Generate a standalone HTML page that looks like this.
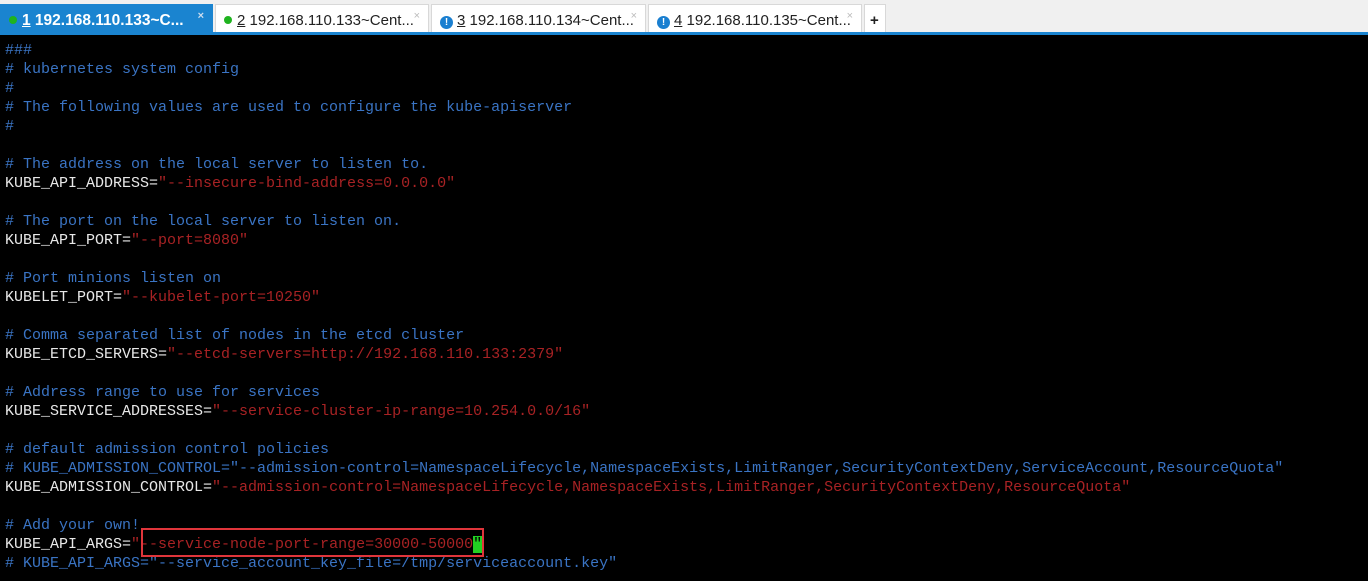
<!DOCTYPE html>
<html><head><meta charset="utf-8"><style>
*{margin:0;padding:0;box-sizing:border-box}
body{width:1368px;height:581px;background:#000;overflow:hidden;font-family:"Liberation Sans",sans-serif}
.bar{position:absolute;left:0;top:0;width:1368px;height:35px;background:#f0f0f0;border-bottom:3px solid #1a84d0}
.tab{position:absolute;top:4px;height:28px;background:#fff;border:1px solid #d8d8d8;border-bottom:none;font-size:15px;color:#222;padding:7px 0 0 8px;white-space:nowrap}
.tab.a{top:4px;background:#1a84d0;color:#fff;font-weight:bold;border-color:#1a84d0;font-size:15.5px}
.dot{display:inline-block;width:8px;height:8px;border-radius:50%;background:#1fb31f;margin-right:5px;vertical-align:1px}
.ex{display:inline-block;width:13px;height:13px;border-radius:50%;background:#1a7fd0;color:#fff;font-size:10px;font-weight:bold;text-align:center;line-height:13px;margin-right:4px;vertical-align:0px}
.x{position:absolute;right:8px;top:5px;font-size:11px;color:#bbb}
.a .x{color:#cde}
u{text-decoration:underline}
pre{position:absolute;left:5px;top:41px;font-family:"Liberation Mono",monospace;font-size:15px;line-height:19px;color:#e8e8e8}
.c{color:#3a74c4}.s{color:#a82224}
.box{position:absolute;left:141px;top:528px;width:343px;height:29px;border:2px solid #e0353b}
.cur{background:#22d022;color:#000}
</style></head><body>
<div class="bar">
<div class="tab a" style="left:0;width:213px"><span class="dot"></span><u>1</u> 192.168.110.133~C...<span class="x">×</span></div>
<div class="tab" style="left:215px;width:214px"><span class="dot"></span><u>2</u> 192.168.110.133~Cent...<span class="x">×</span></div>
<div class="tab" style="left:431px;width:215px"><span class="ex">!</span><u>3</u> 192.168.110.134~Cent...<span class="x">×</span></div>
<div class="tab" style="left:648px;width:214px"><span class="ex">!</span><u>4</u> 192.168.110.135~Cent...<span class="x">×</span></div>
<div class="tab" style="left:864px;width:22px;padding-left:5px;font-weight:bold">+</div>
</div>
<pre><span class="c">###
# kubernetes system config
#
# The following values are used to configure the kube-apiserver
#</span>

<span class="c"># The address on the local server to listen to.</span>
KUBE_API_ADDRESS=<span class="s">"--insecure-bind-address=0.0.0.0"</span>

<span class="c"># The port on the local server to listen on.</span>
KUBE_API_PORT=<span class="s">"--port=8080"</span>

<span class="c"># Port minions listen on</span>
KUBELET_PORT=<span class="s">"--kubelet-port=10250"</span>

<span class="c"># Comma separated list of nodes in the etcd cluster</span>
KUBE_ETCD_SERVERS=<span class="s">"--etcd-servers=http://192.168.110.133:2379"</span>

<span class="c"># Address range to use for services</span>
KUBE_SERVICE_ADDRESSES=<span class="s">"--service-cluster-ip-range=10.254.0.0/16"</span>

<span class="c"># default admission control policies
# KUBE_ADMISSION_CONTROL="--admission-control=NamespaceLifecycle,NamespaceExists,LimitRanger,SecurityContextDeny,ServiceAccount,ResourceQuota"</span>
KUBE_ADMISSION_CONTROL=<span class="s">"--admission-control=NamespaceLifecycle,NamespaceExists,LimitRanger,SecurityContextDeny,ResourceQuota"</span>

<span class="c"># Add your own!</span>
KUBE_API_ARGS=<span class="s">"--service-node-port-range=30000-50000</span><span class="cur">"</span>
<span class="c"># KUBE_API_ARGS="--service_account_key_file=/tmp/serviceaccount.key"</span></pre>
<div class="box"></div>
</body></html>
